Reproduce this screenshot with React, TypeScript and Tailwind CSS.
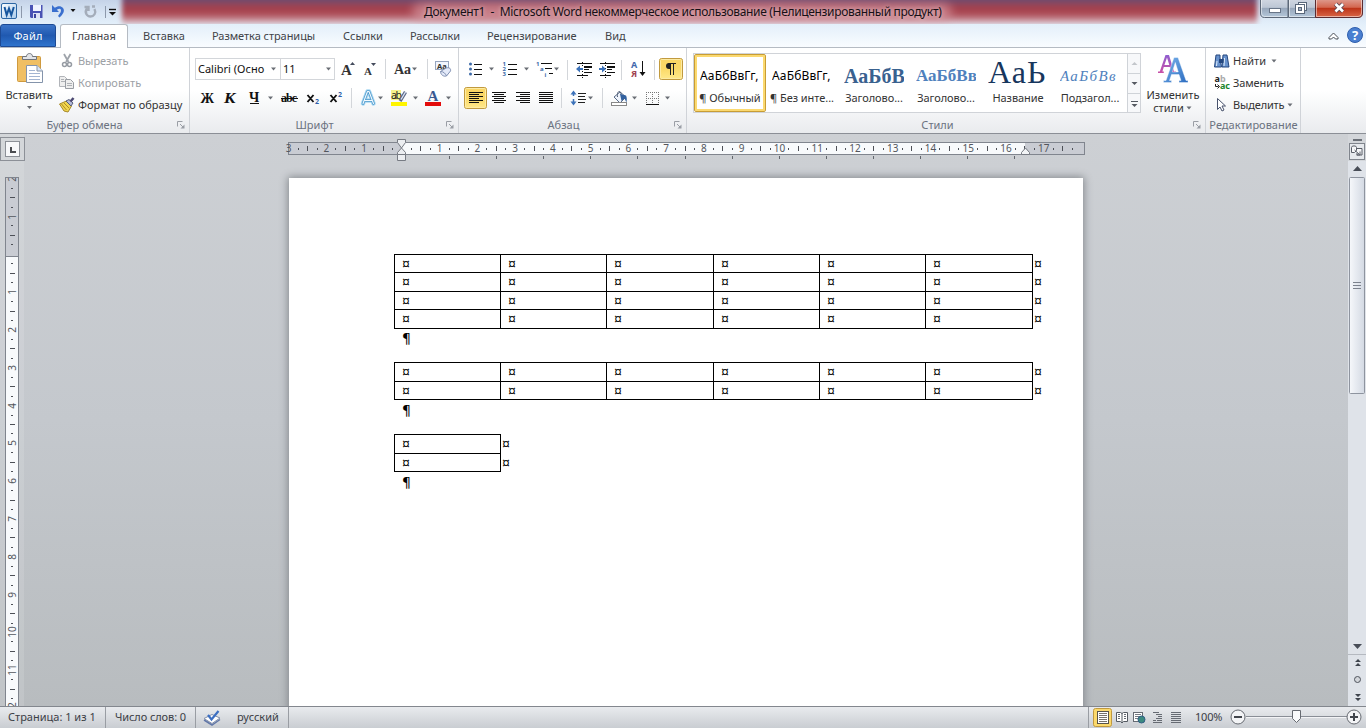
import React from "react";

type PicProps = { x: number; y: number; w: number; h: number; children?: React.ReactNode };

/* A drawing whose contents use window coordinates. */
function Pic({ x, y, w, h, children }: PicProps) {
  return (
    <svg width={w} height={h} viewBox={`${x} ${y} ${w} ${h}`} className="block shrink-0">
      {children}
    </svg>
  );
}

function Arrow({ x, y, c = "#6a6e75" }: { x: number; y: number; c?: string }) {
  return <path d={`M${x - 2.5} ${y - 1.5}h5l-2.500 3z`} fill={c} />;
}

function Sep({ x, y }: { x: number; y: number }) {
  return <path d={`M${x + 0.5} ${y}v20`} stroke="#d3d6da" />;
}

function Lines({ x, y, rows, c = "#111" }: { x: number; y: number; rows: [number, number][]; c?: string }) {
  return (
    <g fill={c}>
      {rows.map(([o, l], i) => (
        <rect key={i} x={x + o} y={y + i * 2} width={l} height={1} />
      ))}
    </g>
  );
}

function Corner() {
  return (
    <svg width="8" height="8" viewBox="0 0 8 8" className="mt-[2px] mr-[4px] shrink-0">
      <path d="M.5 5.500v-5h5M3 3l3 3" fill="none" stroke="#9a9ea5" />
      <path d="M7.500 3.500v4h-4z" fill="#9a9ea5" />
    </svg>
  );
}

function GroupTitle({ children, cls = "", corner = true }: { children: string; cls?: string; corner?: boolean }) {
  return (
    <div className="-mt-px flex h-4 w-full items-center text-[11px] leading-none text-[#6b7280]">
      <span className={`flex-1 whitespace-nowrap text-center ${cls}`}>{children}</span>
      {corner && <Corner />}
    </div>
  );
}

function TitleBar() {
  return (
    <div className="relative flex h-6 shrink-0 overflow-hidden bg-linear-to-b from-[#c5d3e8] via-[#d7e4f3] to-[#e3effa]">
      <div className="absolute top-[-6px] left-[122px] h-[30px] w-[1135px] bg-[linear-gradient(to_bottom,#6f4c70_20%,#9b4454_38%,#a8404b_56%,#b4606a_74%,#d0a5ae_90%,#dcc3cd_100%)] blur-[2.500px]" />
      <div className="absolute top-[3px] left-[412px] h-[18px] w-[540px] rounded-full bg-[#dba0aa] opacity-60 blur-[5px]" />
      <div className="relative flex w-full">
        <Pic x={0} y={0} w={122} h={24}>
          <defs>
            <linearGradient id="wl" x1="0" y1="0" x2="1" y2="1">
              <stop stopColor="#fff" />
              <stop offset="1" stopColor="#a9cbec" />
            </linearGradient>
          </defs>
          <rect x="1.500" y="3.500" width="15" height="15" rx="1.500" fill="url(#wl)" stroke="#2c66a3" />
          <path d="M4.500 7l2.200 8L9 8.500l2.300 6.500L13.800 7" fill="none" stroke="#17569e" strokeWidth="2" />
          <path d="M21.500 6v12" stroke="#8d99ab" />
          <path d="M30 5h12.500v13H31l-1-1z" fill="#4a53b4" />
          <rect x="33" y="5" width="8" height="6" fill="#f1f4ff" />
          <rect x="33" y="13" width="7" height="5" fill="#dfe3f5" />
          <rect x="34" y="14" width="2" height="4" fill="#3c459f" />
          <path d="M52 5v7h7l-2.200-2.200C60 7.500 62 9 60.500 12.500L58 16l1.500 1.500C63.500 14 65 10.500 63 8c-2-2.500-5.500-2.300-8.200-.2z" fill="#3a6fce" />
          <Arrow x={73} y={10.500} c="#111" />
          <path d="M87 8.500c-3 4 0 8 3.500 8s6-3.500 4-7.500M84.500 7h4v4M92 6.500h3" fill="none" stroke="#a4adba" strokeWidth="2.400" />
          <path d="M105.500 6v12" stroke="#8d99ab" />
          <path d="M109 9.500h7" stroke="#111" strokeWidth="1.400" />
          <path d="M109 12h7l-3.500 3.500z" fill="#111" />
        </Pic>
        <div className="flex flex-1 justify-start pl-[302px]">
          <span className="mt-[4px] text-[12px] leading-4 tracking-[-0.33px] whitespace-pre text-[#161016] [text-shadow:0_0_5px_#ffffffaa]">
            Документ1  -  Microsoft Word некоммерческое использование (Нелицензированный продукт)
          </span>
        </div>
        <Pic x={1258} y={0} w={108} h={24}>
          <defs>
            <linearGradient id="wb" x1="0" y1="0" x2="0" y2="1">
              <stop stopColor="#d1d7e2" />
              <stop offset=".45" stopColor="#bdc7d5" />
              <stop offset=".5" stopColor="#98a7bb" />
              <stop offset="1" stopColor="#b5c8db" />
            </linearGradient>
            <linearGradient id="wc" x1="0" y1="0" x2="0" y2="1">
              <stop stopColor="#df9d91" />
              <stop offset=".45" stopColor="#d3664f" />
              <stop offset=".5" stopColor="#bd3318" />
              <stop offset="1" stopColor="#d9694a" />
            </linearGradient>
          </defs>
          <path d="M1260.500 -1v14q0 4.500 4 4.500h23.500V-1z" fill="url(#wb)" stroke="#5d6878" />
          <path d="M1288.500 -1v18.500h27V-1z" fill="url(#wb)" stroke="#5d6878" />
          <path d="M1315.500 -1v18.500h42.500q4.500 0 4.500-4.500V-1z" fill="url(#wc)" stroke="#5b2c31" />
          <path d="M1261.500 0v13q0 3.500 3 3.500h22.500M1289.500 0v16.500h25M1316.500 0v16.500h41.500q3.500 0 3.500-3.500V0" fill="none" stroke="#fff" opacity=".5" />
          <rect x="1269.500" y="8.500" width="11" height="4" fill="#fff" stroke="#687588" />
          <rect x="1298.500" y="2.500" width="8" height="8" fill="#fff" stroke="#59677a" />
          <rect x="1295.500" y="4.500" width="9" height="9" fill="#fff" stroke="#59677a" />
          <rect x="1298.500" y="7.500" width="3" height="3" fill="#a6b2c4" stroke="#59677a" />
          <path d="M1335.500 4l7.500 7.500M1343 4l-7.500 7.500" stroke="#5f4650" strokeWidth="4.500" />
          <path d="M1335.500 4l7.500 7.500M1343 4l-7.500 7.500" stroke="#fff" strokeWidth="2.600" />
        </Pic>
      </div>
    </div>
  );
}

function Tabs() {
  return (
    <div className="flex h-6 shrink-0 items-end border-b border-[#b5bbc3] bg-linear-to-b from-[#e3effa] to-[#f9fcff] text-[11px] text-[#3f4348]">
      <div className="flex h-[23px] w-14 items-center justify-center rounded-t-[3px] border border-[#1d4a94] bg-linear-to-b from-[#3b74c8] via-[#2059b0] to-[#2f74cd] pt-px tracking-[0.2px] text-white">
        Файл
      </div>
      <div className="-mb-px ml-1 flex h-6 w-[68px] items-center justify-center rounded-t-[3px] border border-b-0 border-[#b5bbc3] bg-white pb-px tracking-[0.1px]">
        Главная
      </div>
      <div className="flex h-full flex-1 items-center pt-[2px] pl-[15px] whitespace-nowrap">
        <span className="w-[69px]">Вставка</span>
        <span className="w-[131px] tracking-[-0.05px]">Разметка страницы</span>
        <span className="w-[67px]">Ссылки</span>
        <span className="w-[77px] tracking-[-0.1px]">Рассылки</span>
        <span className="w-[118px]">Рецензирование</span>
        <span>Вид</span>
      </div>
      <Pic x={1326} y={24} w={40} h={23}>
        <path d="M1329 37.500l4.500-4.500 4.500 4.500v1.500h-2.500l-2-2-2 2h-2.500z" fill="#fff" stroke="#474c55" />
        <circle cx="1355" cy="35" r="7.500" fill="#4a7fd0" stroke="#2f5fae" />
        <text x="1355" y="39.500" textAnchor="middle" fontSize="13" fontWeight="700" fill="#fff">?</text>
      </Pic>
    </div>
  );
}

function Clipboard() {
  return (
    <div className="flex w-[190px] shrink-0 flex-col border-r border-[#d0d3d8]">
      <div className="flex h-[69px]">
        <div className="flex w-[58px] flex-col items-center">
          <Pic x={0} y={48} w={58} h={37}>
            <rect x="17.500" y="56.500" width="23" height="25" rx="1" fill="#f0bf63" stroke="#cf9a3f" />
            <path d="M22.500 59.500v-3h4c0-4 6-4 6 0h4v3z" fill="#e2e4e8" stroke="#70757d" />
            <path d="M26.500 65.500h10.500l5.500 5.500v11.500h-16z" fill="#fff" stroke="#8494ab" />
            <path d="M37 65.500v5.500h5.500" fill="#dbe6f5" stroke="#8494ab" />
            <path d="M29 70.500h6M29 73.500h11M29 76.500h11M29 79.500h11" stroke="#a3b5d2" />
          </Pic>
          <span className="mt-[2px] text-[11px] leading-4 tracking-[-0.1px] text-[#333]">Вставить</span>
          <Pic x={20} y={103} w={18} h={8}><Arrow x={29.500} y={107.500} /></Pic>
        </div>
        <div className="flex flex-col pt-[2px] text-[11px] whitespace-nowrap">
          <div className="flex h-[22px] items-center text-[#9da1a6]">
            <Pic x={58} y={50} w={20} h={22}>
              <path d="M64 54l4.500 8M70.500 54l-4.500 8" stroke="#9fa4ab" strokeWidth="1.800" />
              <circle cx="64.500" cy="64.500" r="2" fill="none" stroke="#969ba3" strokeWidth="1.500" />
              <circle cx="69.500" cy="64.500" r="2" fill="none" stroke="#969ba3" strokeWidth="1.500" />
            </Pic>
            <span className="tracking-[-0.05px]">Вырезать</span>
          </div>
          <div className="flex h-[22px] items-center text-[#9da1a6]">
            <Pic x={58} y={72} w={20} h={22}>
              <path d="M59.500 76.500h5l3 3v7h-8z" fill="#eee" stroke="#b1b4b9" />
              <path d="M65.500 79.500h5l3 3v6h-8z" fill="#eee" stroke="#999da3" />
              <path d="M61 79.500h3M61 81.500h4M67 83.500h5M67 85.500h5" stroke="#aeb1b5" />
            </Pic>
            Копировать
          </div>
          <div className="flex h-[22px] items-center text-[#333]">
            <Pic x={58} y={94} w={20} h={22}>
              <path d="M59.500 104l7-3 5 5-3.500 6-4-1z" fill="#f0d64f" stroke="#a6882b" />
              <path d="M61.500 104l5 6M64 103l5 5" stroke="#b28d22" />
              <path d="M66 101l3-1.500 4 3.500-2 3z" fill="#b4b9d6" stroke="#565d79" />
              <path d="M70.500 101.500l3-3.500" stroke="#4b4871" strokeWidth="2.500" />
            </Pic>
            Формат по образцу
          </div>
        </div>
      </div>
      <GroupTitle cls="pr-[8px]">Буфер обмена</GroupTitle>
    </div>
  );
}

function FontGroup() {
  return (
    <div className="flex w-[269px] shrink-0 flex-col border-r border-[#d0d3d8]">
      <div className="flex h-[69px] flex-col pt-[9px]">
        <div className="flex h-[24px] items-center pl-[5px]">
          <div className="flex h-[22px] w-[86px] items-center border border-[#d3d6da] bg-white pl-[2px] text-[11px] whitespace-nowrap text-[#111]">
            <span className="w-[71px]">Calibri (Осно</span>
            <Pic x={0} y={0} w={8} h={8}><Arrow x={4.500} y={4} /></Pic>
          </div>
          <div className="flex h-[22px] w-[54px] items-center border border-l-0 border-[#d3d6da] bg-white pl-[2px] text-[11px] text-[#111]">
            <span className="w-[41px]">11</span>
            <Pic x={0} y={0} w={8} h={8}><Arrow x={4.500} y={4} /></Pic>
          </div>
          <Pic x={335} y={57} w={123} h={24}>
            <g fontFamily="Liberation Serif" fontWeight="700" fill="#333">
              <text x="341" y="75" fontSize="15">А</text>
              <text x="364" y="75" fontSize="11">А</text>
              <text x="394" y="74" fontSize="14" textLength="17">Аа</text>
            </g>
            <path d="M350 65h5l-2.500-3z" fill="#444b5c" />
            <path d="M371 63h5l-2.500 3z" fill="#444b5c" />
            <Sep x={385} y={59} />
            <Arrow x={414.500} y={69} />
            <Sep x={427} y={59} />
            <rect x="435.500" y="61.500" width="13" height="8" fill="#f3f6fd" stroke="#96a4be" />
            <text x="437" y="68.500" fontSize="7.500" fontWeight="700" fill="#333">Aa</text>
            <path d="M440.500 71.500l5.500-3.500c4-1 5 1 4.500 3l-4 5c-3 1-6-1.500-6-4.500z" fill="#e4eaf9" stroke="#7f8fb2" />
            <path d="M440.500 71.500c3 0 5 2 6 4.500" fill="none" stroke="#7f8fb2" />
          </Pic>
        </div>
        <div className="mt-[4px] flex h-[24px]">
          <Pic x={190} y={85} w={268} h={24}>
            <g fontFamily="Liberation Serif" fontWeight="700" fill="#111">
              <text x="200.500" y="103" fontSize="14.500" textLength="13.500" lengthAdjust="spacingAndGlyphs">Ж</text>
              <text x="224" y="103" fontSize="14.500" fontStyle="italic" textLength="11.500" lengthAdjust="spacingAndGlyphs">К</text>
              <text x="249" y="102" fontSize="14">Ч</text>
              <text x="281" y="102" fontSize="12" textLength="16">abc</text>
            </g>
            <path d="M250 103.500h9M281 98.500h17" stroke="#111" />
            <Arrow x={270.500} y={98} />
            <path d="M307.500 95l6 7M313.500 95l-6 7M330.500 95l6 7M336.500 95l-6 7" stroke="#111" strokeWidth="1.900" />
            <text x="315" y="104" fontSize="7" fontWeight="700" fill="#2e5fa9">2</text>
            <text x="338" y="97" fontSize="7" fontWeight="700" fill="#2e5fa9">2</text>
            <Sep x={351} y={88} />
            <g fill="none" strokeLinejoin="round" strokeLinecap="round">
              <path d="M363 103.500l4.500-12h1.500l4.500 12M365 100.500h7" stroke="#a9d8f2" strokeWidth="4.500" />
              <path d="M363 103.500l4.500-12h1.500l4.500 12M365 100.500h7" stroke="#4f99cc" strokeWidth="2.600" />
              <path d="M363 103.500l4.500-12h1.500l4.500 12M365 100.500h7" stroke="#f2faff" strokeWidth="1.100" />
            </g>
            <Arrow x={380.500} y={98} />
            <rect x="391" y="90" width="10" height="10" fill="#f6f28b" />
            <text x="391" y="99" fontSize="10.500" fill="#222" textLength="11">ab</text>
            <path d="M400 101l5.500-9" stroke="#5c6885" strokeWidth="3.400" />
            <path d="M401 99.500l4.500-7.500" stroke="#dce5f6" strokeWidth="1.300" />
            <rect x="391" y="102" width="16" height="4" fill="#fff500" />
            <Arrow x={415.500} y={98} />
            <text x="427.500" y="101" fontSize="15" fontFamily="Liberation Serif" fontWeight="700" fill="#3a5a93" textLength="11">А</text>
            <rect x="425" y="102" width="16" height="4" fill="#e30c0c" />
            <Arrow x={448.500} y={98} />
          </Pic>
        </div>
      </div>
      <GroupTitle cls="pr-[7px]">Шрифт</GroupTitle>
    </div>
  );
}

function Hot({ x, y, w, h }: PicProps) {
  return (
    <>
      <rect x={x + 0.5} y={y + 0.5} width={w - 1} height={h - 1} rx="2" fill="url(#hot)" stroke="#c19a3f" />
      <rect x={x + 1.5} y={y + 1.5} width={w - 3} height={h - 3} rx="1" fill="none" stroke="#fdeba3" />
    </>
  );
}

function ParagraphGroup() {
  return (
    <div className="flex w-[228px] shrink-0 flex-col border-r border-[#d0d3d8]">
      <div className="flex h-[69px] flex-col pt-[9px]">
        <Pic x={459} y={57} w={227} h={26}>
          <defs>
            <linearGradient id="hot" x1="0" y1="0" x2="0" y2="1">
              <stop stopColor="#fbd664" />
              <stop offset=".5" stopColor="#fbd968" />
              <stop offset="1" stopColor="#ffe98c" />
            </linearGradient>
          </defs>
          <g fill="#3d6aa8">
            <circle cx="470.500" cy="64" r="1.500" /><circle cx="470.500" cy="69" r="1.500" /><circle cx="470.500" cy="74" r="1.500" />
          </g>
          <g fontSize="6" fontWeight="700" fill="#3d6aa8">
            <text x="502.500" y="66">1</text><text x="502.500" y="71">2</text><text x="502.500" y="76">3</text>
            <text x="536" y="65.500">1</text><text x="540" y="71">a</text><text x="544.500" y="76.500">i</text>
          </g>
          <path d="M474 64.500h8M474 69.500h8M474 74.500h8M508 64.500h9M508 69.500h9M508 74.500h9M541 63.500h11M545 68.500h7M549 73.500h4" stroke="#111" />
          <Arrow x={491.500} y={69} /><Arrow x={526.500} y={69} /><Arrow x={556.500} y={69} />
          <Sep x={567} y={60} />
          <g stroke="#111">
            <path d="M577 63.500h15M584 66.500h8M584 69.500h5M584 72.500h8M577 75.500h11M600 63.500h15M607 66.500h8M607 69.500h5M607 72.500h8M600 75.500h11" />
            <path d="M584 67.500h8M607 67.500h8" />
            <path d="M582.500 62v16M605.500 62v16" strokeDasharray="1 2" />
          </g>
          <path d="M576 69l4-3.500v2.500h3v2h-3v2.500zM606 69l-4-3.500v2.500h-3v2h3v2.500z" fill="#3d73ba" />
          <Sep x={621} y={60} />
          <g fontSize="9" fontWeight="700">
            <text x="631" y="68" fill="#3f68ad">A</text><text x="631" y="77" fill="#a14252">Я</text>
          </g>
          <path d="M642.500 61v14" stroke="#111" /><path d="M639.500 72h6l-3 4z" fill="#111" />
          <Sep x={654} y={60} />
          <Hot x={659} y={58} w={24} h={22} />
          <path d="M670.500 64v11M673.500 64v11M668.500 63.500h7.500" stroke="#222" />
          <path d="M671 63h-2a3 3 0 0 0 0 6h2z" fill="#222" />
        </Pic>
        <Pic x={459} y={83} w={227} h={30}>
          <Hot x={464} y={87} w={23} h={22} />
          <Lines x={469} y={92} rows={[[0, 14], [0, 10], [0, 14], [0, 10], [0, 14], [0, 10]]} />
          <Lines x={492} y={92} rows={[[0, 14], [2, 10], [0, 14], [2, 10], [0, 14], [2, 10]]} />
          <Lines x={516} y={92} rows={[[0, 14], [4, 10], [0, 14], [4, 10], [0, 14], [4, 10]]} />
          <Lines x={539} y={92} rows={[[0, 14], [0, 14], [0, 14], [0, 14], [0, 14], [0, 14]]} />
          <Sep x={561} y={88} />
          <path d="M573.500 92v4M573.500 99v5" stroke="#3d73ba" strokeWidth="1.500" />
          <path d="M570.500 94.500l3-4 3 4zM570.500 101.500l3 4 3-4z" fill="#3d73ba" />
          <path d="M578 93.500h8M578 96.500h7M578 99.500h8M578 102.500h7" stroke="#222" />
          <Arrow x={590.500} y={98} />
          <Sep x={602} y={88} />
          <path d="M614 97l6-5 6 5-6 6z" fill="#eef3fb" stroke="#5b6c88" />
          <path d="M617.500 97c-1-7 4-7 3.500-2" fill="none" stroke="#4d5b73" />
          <path d="M620 94l6 1.500c1 2 1 4 .5 7l-2-4-3 2.500z" fill="#32619f" />
          <rect x="611.500" y="102.500" width="15" height="3" fill="#fff" stroke="#888" />
          <Arrow x={634.500} y={98} />
          <g stroke="#777" strokeDasharray="1 1">
            <path d="M646 92.500h13M646 98.500h13M646.500 92v12M652.500 92v12M658.500 92v12" />
          </g>
          <path d="M646 104.500h13" stroke="#111" />
          <Arrow x={667.500} y={98} />
        </Pic>
      </div>
      <GroupTitle cls="pr-[6px]">Абзац</GroupTitle>
    </div>
  );
}

const gallery = [
  { s: "АаБбВвГг,", n: "¶ Обычный", c: "text-[12px] text-black tracking-[0.15px] mt-[8px]", sel: true },
  { s: "АаБбВвГг,", n: "¶ Без инте...", c: "text-[12px] text-black tracking-[0.15px] mt-[8px]" },
  { s: "АаБбВ", n: "Заголово...", c: "font-['Liberation_Serif'] font-bold text-[20px] text-[#39618f] mt-[8px]" },
  { s: "АаБбВв", n: "Заголово...", c: "font-['Liberation_Serif'] font-bold text-[17px] text-[#4f81bd] mt-[8px]" },
  { s: "АаЬ", n: "Название", c: "font-['Liberation_Serif'] text-[32px] text-[#17365d] mt-px tracking-[1px]" },
  { s: "АаБбВв", n: "Подзагол...", c: "font-['Liberation_Serif'] italic text-[15px] text-[#4f81bd] mt-[8px] tracking-[1.400px]" },
];

function StylesGroup() {
  return (
    <div className="flex w-[519px] shrink-0 flex-col border-r border-[#d0d3d8]">
      <div className="flex h-[69px] pt-[5px] pl-[6px]">
        <div className="flex h-[60px] w-[448px] border border-[#d0d3d8] bg-white">
          {gallery.map((g, i) => (
            <div
              key={i}
              className={
                g.sel
                  ? "flex h-[58px] w-[72px] shrink-0 flex-col items-center rounded-[2px] border border-[#c89d35] shadow-[inset_0_0_0_2px_#fbd970]"
                  : "flex h-[58px] w-[72px] shrink-0 flex-col items-center border border-transparent"
              }
            >
              <div className="flex h-[33px] w-[60px] items-center overflow-hidden">
                <span className={`leading-[24px] whitespace-nowrap ${g.c}`}>{g.s}</span>
              </div>
              <span className="mt-[2px] text-[11px] leading-4 tracking-[-0.05px] whitespace-nowrap text-[#333]">{g.n}</span>
            </div>
          ))}
          <Pic x={1126} y={54} w={14} h={58}>
            <rect x="1127" y="54" width="13" height="58" fill="#f7f8fa" />
            <path d="M1127.500 54v58M1127 73.500h13M1127 93.500h13" stroke="#cfd3d8" />
            <path d="M1131.500 65h6l-3-3z" fill="#c3c6cb" />
            <path d="M1131.500 82h6l-3 3zM1131.500 104h6l-3 3z" fill="#555a62" />
            <path d="M1131 101.500h7" stroke="#555a62" />
          </Pic>
        </div>
        <div className="ml-[3px] flex w-[58px] flex-col items-center text-[11px] leading-[13px] text-[#333]">
          <Pic x={1144} y={53} w={58} h={35}>
            <defs>
              <linearGradient id="ga" x1="0" y1="0" x2="0" y2="1">
                <stop stopColor="#8f5fd0" /><stop offset="1" stopColor="#c94fa6" />
              </linearGradient>
              <linearGradient id="gb" x1="0" y1="0" x2="1" y2="1">
                <stop stopColor="#7ab4ec" /><stop offset="1" stopColor="#2c6cc0" />
              </linearGradient>
            </defs>
            <path
              d="M1158 73v-1.500h1.800L1165.500 55h3.500l5 16.500h2V73h-6v-1.500h1l-1.200-4.500h-6l-1.400 4.500h1.400V73zM1164.400 65h4.900l-2.300-7.500z"
              fill="url(#ga)" fillRule="evenodd"
            />
            <path
              d="M1163.500 82.500v-2h2.500L1174 57.500h4l8 23h2v2h-9v-2h2l-2-6h-7.500l-2 6h2v2zM1172.300 72h6l-3-9.500z"
              fill="url(#gb)" fillRule="evenodd" stroke="#fff" strokeWidth=".4"
            />
          </Pic>
          <span>Изменить</span>
          <span className="flex items-center">
            стили
            <Pic x={0} y={0} w={9} h={8}><Arrow x={5} y={4} /></Pic>
          </span>
        </div>
      </div>
      <GroupTitle cls="pr-[5px]">Стили</GroupTitle>
    </div>
  );
}

function EditingGroup() {
  return (
    <div className="flex w-[95px] shrink-0 flex-col border-r border-[#d0d3d8]">
      <div className="flex h-[69px] flex-col pt-[2px] text-[11px] whitespace-nowrap text-[#333]">
        <div className="flex h-[22px] items-center">
          <Pic x={1206} y={50} w={27} h={22}>
            <path d="M1216 55h4v3l1.500 9h-7zM1223 55h4l2 12h-7z" fill="#6892cd" stroke="#24477f" />
            <path d="M1219 59h5v4h-5z" fill="#24477f" />
            <path d="M1217 61l-.5 5M1224.500 58l-.5 8" stroke="#e0eefc" />
          </Pic>
          Найти
          <Pic x={0} y={0} w={14} h={8}><Arrow x={8} y={4} /></Pic>
        </div>
        <div className="flex h-[22px] items-center">
          <Pic x={1206} y={73} w={27} h={22}>
            <g fontSize="9" fontWeight="700">
              <text x="1214.500" y="83" fill="#222">a</text><text x="1220" y="83" fill="#aaa">b</text>
              <text x="1220" y="90" fill="#18852c" textLength="10">ac</text>
            </g>
            <path d="M1215.500 85v2.500h3M1217.500 85.500l2 2-2 2" fill="none" stroke="#222" />
          </Pic>
          <span className="tracking-[-0.1px]">Заменить</span>
        </div>
        <div className="flex h-[22px] items-center">
          <Pic x={1206} y={94} w={27} h={22}>
            <path d="M1217.500 98.500v11l2.500-2.500 2 4 2-1-2-4h3.500z" fill="#fff" stroke="#48526c" />
          </Pic>
          <span className="tracking-[-0.15px]">Выделить</span>
          <Pic x={0} y={0} w={13} h={8}><Arrow x={6} y={4} /></Pic>
        </div>
      </div>
      <GroupTitle corner={false} cls="pl-px">Редактирование</GroupTitle>
    </div>
  );
}

function Mark({ q, vertical = false }: { q: number; vertical?: boolean }) {
  const r = ((q % 4) + 4) % 4;
  if (q === 0) return null;
  if (r === 0) return <span className={vertical ? "-rotate-90" : ""}>{Math.abs(q / 4)}</span>;
  if (r === 2) return <i className={vertical ? "h-px w-[5px] bg-[#4d5057]" : "h-[5px] w-px bg-[#4d5057]"} />;
  return <i className={vertical ? "h-px w-[2px] bg-[#4d5057]" : "h-[2px] w-px bg-[#4d5057]"} />;
}

const hq = Array.from({ length: 84 }, (_, i) => i - 12);
const vq = Array.from({ length: 57 }, (_, i) => i - 8);

function HRuler() {
  return (
    <div className="relative mt-[8px] ml-[264px] h-[13px] w-[797px] shrink-0 border border-[#80858e] bg-[linear-gradient(to_right,#c9ccd3_112px,#f8fafc_112px,#f8fafc_736px,#c9ccd3_736px)]">
      <div className="-ml-[5px] flex h-[11px] items-center text-[10px] leading-[11px] text-[#53565d]">
        {hq.map((q) => (
          <div key={q} className="flex w-[9.445px] shrink-0 justify-center">
            <Mark q={q} />
          </div>
        ))}
      </div>
      <svg width="800" height="24" viewBox="288 138 800 24" className="absolute -top-[5px] -left-px">
        <path d="M397.500 139.500h8v3l-4 5.500-4-5.500z" fill="#eceef1" stroke="#777b83" />
        <path d="M397.500 154.500v-2l4-4.500 4 4.500v2z" fill="#eceef1" stroke="#777b83" />
        <path d="M397.500 154.500h8v6h-8z" fill="#eceef1" stroke="#777b83" />
        <path d="M1021.500 154.500v-2l4-4.500 4 4.500v2z" fill="#f2f4f6" stroke="#777b83" />
        {Array.from({ length: 13 }, (_, i) => (
          <path key={i} d={`M${449.5 + Math.round(i * 47.1)} 156v3`} stroke="#62666d" />
        ))}
      </svg>
    </div>
  );
}

function VRuler() {
  return (
    <div className="ml-[5px] h-[529px] w-[14px] overflow-hidden border border-b-0 border-[#80858e] bg-[linear-gradient(to_bottom,#c9ccd3_78px,#80858e_78px,#80858e_79px,#f8fafc_79px)]">
      <div className="-mt-[4px] flex flex-col items-center text-[10px] leading-none text-[#53565d]">
        {vq.map((q) => (
          <div key={q} className="flex h-[9.460px] shrink-0 items-center justify-center">
            <Mark q={q} vertical />
          </div>
        ))}
      </div>
    </div>
  );
}

const colW = ["w-[106px]", "w-[106px]", "w-[107px]", "w-[106px]", "w-[106px]", "w-[107px]"];
const rowH = ["h-[18px]", "h-[19px]", "h-[18px]", "h-[19px]"];
const rowH2 = ["h-[19px]", "h-[18px]"];

function WordTable({ cols, heights }: { cols: number; heights: string[] }) {
  return (
    <div className="text-[14px] leading-none text-black">
      {heights.map((h, r) => (
        <div key={r} className={`flex ${h}`}>
          {colW.slice(0, cols).map((w, c) => (
            <div
              key={c}
              className={`${w} flex items-center border-t border-l border-black pl-[7px] ${r === heights.length - 1 ? "-mb-px border-b" : ""}`}
            >
              ¤
            </div>
          ))}
          <div className={`flex items-center border-l border-black pt-px pl-px ${r === heights.length - 1 ? "-mb-px pb-px" : ""}`}>¤</div>
        </div>
      ))}
    </div>
  );
}

function Pilcrow() {
  return <div className="h-[34px] pt-[3px] pl-[8px] font-['DejaVu_Sans'] text-[14px] leading-[15px] text-black">¶</div>;
}

function Scroll() {
  return (
    <div className="w-[18px] shrink-0 bg-[#dfe3e9]">
      <Pic x={1348} y={134} w={18} h={572}>
        <defs>
          <linearGradient id="th" x1="0" y1="0" x2="1" y2="0">
            <stop stopColor="#f6f8fb" /><stop offset="1" stopColor="#d3d9e3" />
          </linearGradient>
        </defs>
        <rect x="1348" y="134" width="18" height="27" fill="#d3d6da" />
        <rect x="1353" y="139" width="9" height="2" fill="#6b7078" />
        <rect x="1349.500" y="143.500" width="15" height="16" fill="#e6e9ed" stroke="#80858d" />
        <path d="M1351.500 147.500l1-1.500h3l1 1.500v3l-2 2h-3zM1357 148.500h5v6.500h-5v-2" fill="#f6f7f9" stroke="#5a5f68" />
        <path d="M1354.500 150l5 4.500M1360 151.500v3.500h-3.500" fill="none" stroke="#5a5f68" />
        <path d="M1353 171h9l-4.500-5z" fill="#484d57" />
        <rect x="1349.500" y="177.500" width="15" height="216" rx="1" fill="url(#th)" stroke="#8e949f" />
        <path d="M1353 282.500h8M1353 285.500h8M1353 288.500h8" stroke="#7c828d" />
        <path d="M1353 644h9l-4.500 5z" fill="#484d57" />
        <path d="M1348 654.500h18" stroke="#b5b9c0" />
        <path d="M1355 662h6l-3-3zM1355 666h6l-3-3z" fill="#3f444d" />
        <circle cx="1357.500" cy="679.500" r="3" fill="#d3d6db" stroke="#4e535c" />
        <path d="M1355 694h6l-3 3zM1355 698h6l-3 3z" fill="#3f444d" />
      </Pic>
    </div>
  );
}

function Workspace() {
  return (
    <div className="flex h-[572px] shrink-0 overflow-hidden bg-linear-to-b from-[#cdd0d4] via-[#c4c8cd] to-[#b8bcbf]">
      <div className="flex w-6 shrink-0 flex-col bg-[#ffffff20]">
        <div className="mt-[3px] flex h-[24px] w-[25px] items-center justify-center border border-[#8c9097] bg-[#d4d7da]">
          <div className="h-[16px] w-[15px] border border-[#8c9097] bg-[#f7f8fa] pt-[5px] pl-[4px]">
            <div className="h-[6px] w-[6px] border-b-2 border-l-2 border-[#4b4d51]" />
          </div>
        </div>
        <div className="mt-[16px]"><VRuler /></div>
      </div>
      <div className="flex flex-1 flex-col">
        <HRuler />
        <div className="mt-[23px] ml-[265px] h-[560px] w-[794px] shrink-0 bg-white pt-[76px] pl-[105px] shadow-[0_0_8px_1px_#83878c]">
          <WordTable cols={6} heights={rowH} />
          <Pilcrow />
          <WordTable cols={6} heights={rowH2} />
          <div className="h-px" />
          <Pilcrow />
          <WordTable cols={1} heights={rowH2} />
          <div className="h-px" />
          <Pilcrow />
        </div>
      </div>
      <Scroll />
    </div>
  );
}

function StatusBar() {
  return (
    <div className="flex h-[22px] shrink-0 items-center border-t border-[#83878e] bg-linear-to-b from-[#e9ebee] to-[#c9cdd2] text-[11px] whitespace-nowrap text-[#3c4046]">
      <span className="flex h-full w-[106px] items-center border-r border-[#999da3] pl-[8px]">Страница: 1 из 1</span>
      <span className="flex h-full w-[90px] items-center border-r border-[#999da3] pl-[9px] tracking-[-0.1px]">Число слов: 0</span>
      <span className="flex h-full w-[93px] items-center border-r border-[#999da3]">
        <Pic x={196} y={707} w={41} h={20}>
          <path d="M204 717.500l8-4 8 3.500-8 5.500z" fill="#fff" stroke="#8390aa" />
          <path d="M204 719l8 5 8-5.500" fill="none" stroke="#6278a8" strokeWidth="1.500" />
          <path d="M208 714l3.500 4.500 7-8.500" fill="none" stroke="#3c6fc2" strokeWidth="2.200" />
        </Pic>
        русский
      </span>
      <span className="flex-1" />
      <Pic x={1087} y={707} w={108} h={21}>
        <path d="M1088.500 707v21" stroke="#999da3" />
        <rect x="1093.500" y="708.500" width="18" height="18" rx="2" fill="#fbd96c" stroke="#c19a3f" />
        <rect x="1097.500" y="711.500" width="11" height="12" fill="#fff" stroke="#57534a" />
        <path d="M1099 713.500h8M1099 715.500h8M1099 717.500h8M1099 719.500h8M1099 721.500h8" stroke="#77736b" />
        <path d="M1116.500 712.500h4l1.500 1 1.500-1h4v9h-4l-1.500 1.500-1.500-1.500h-4zM1122 713v10" fill="#fff" stroke="#555a62" />
        <path d="M1118 714.500h2M1118 716.500h2M1118 718.500h2M1124 714.500h2M1124 716.500h2M1124 718.500h2" stroke="#666b73" />
        <rect x="1133.500" y="712.500" width="9" height="9" fill="#fff" stroke="#666b73" />
        <path d="M1135 714.500h6M1135 716.500h6M1135 718.500h4" stroke="#777c84" />
        <circle cx="1141.500" cy="719.500" r="3.500" fill="#3c8a80" stroke="#315d86" />
        <path d="M1153 712.500h6M1156 714.500h6M1158 716.500h4M1156 718.500h6M1153 720.500h3M1157 720.500h5M1153 722.500h9" stroke="#666b73" />
        <path d="M1171 712.500h10M1171 714.500h10M1171 716.500h10M1171 718.500h10M1171 720.500h10M1171 722.500h10" stroke="#666b73" />
      </Pic>
      <span className="w-[35px] tracking-[-0.2px]">100%</span>
      <Pic x={1230} y={707} w={136} h={21}>
        <path d="M1246 716.500h101" stroke="#898e96" /><path d="M1246 717.500h101" stroke="#f3f4f6" />
        <g fill="#f3f4f6" stroke="#666a71">
          <circle cx="1238" cy="717" r="7" /><circle cx="1354" cy="717" r="7" />
        </g>
        <path d="M1234 717h8M1350 717h8M1354 713v8" stroke="#42464d" strokeWidth="2" />
        <path d="M1292.500 710.500h8v8l-4 4-4-4z" fill="#fafbfc" stroke="#666a71" />
      </Pic>
    </div>
  );
}

export default function App() {
  return (
    <div className="flex h-[728px] w-[1366px] flex-col overflow-hidden font-['Noto_Sans',sans-serif]">
      <TitleBar />
      <Tabs />
      <div className="flex h-[86px] shrink-0 border-b border-[#8b8f96] bg-linear-to-b from-white from-50% to-[#e9ebee]">
        <Clipboard />
        <FontGroup />
        <ParagraphGroup />
        <StylesGroup />
        <EditingGroup />
      </div>
      <Workspace />
      <StatusBar />
    </div>
  );
}
